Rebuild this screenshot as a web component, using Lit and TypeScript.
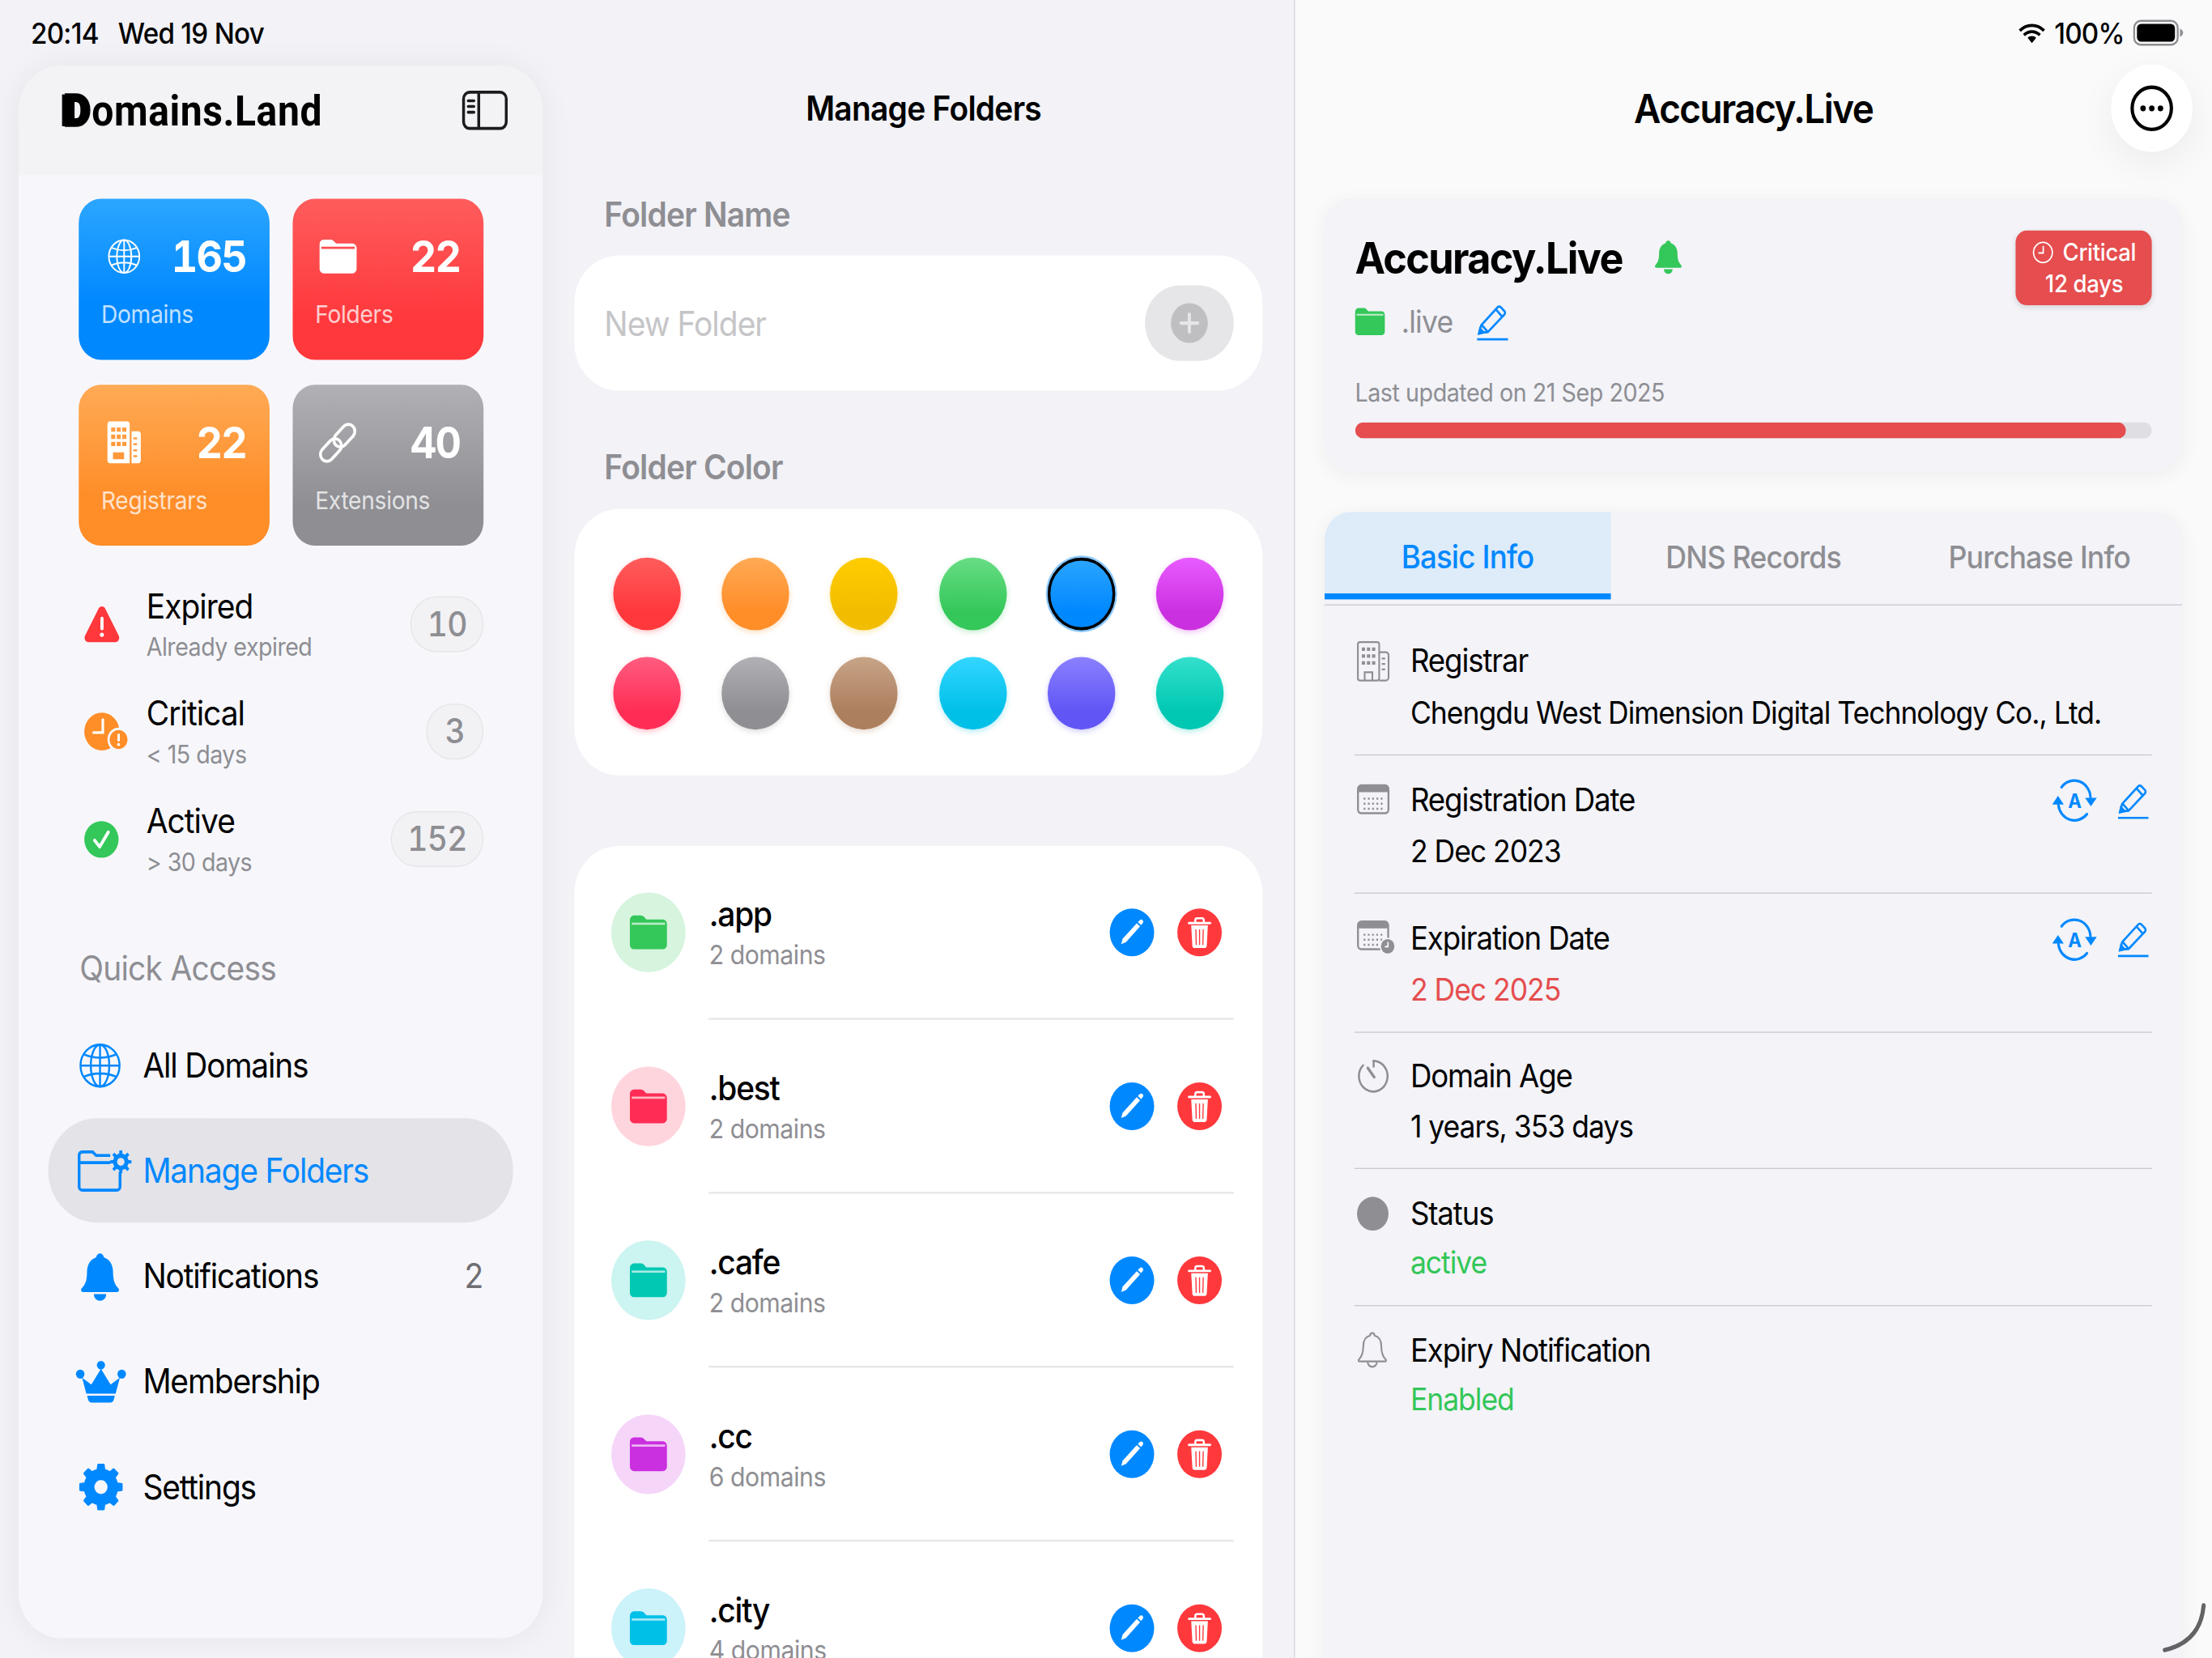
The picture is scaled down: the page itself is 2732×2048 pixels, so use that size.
import { LitElement, html, css, svg } from "lit";
import { customElement } from "lit/decorators.js";

const rects = (list: number[][]) =>
  list.map(([x, y, w, h]) => `M${x} ${y}h${w}v${h}h${-w}z`).join("");

const gearPath = (cx: number, cy: number, ro: number, ri: number, n: number) => {
  let d = "";
  const step = (Math.PI * 2) / n;
  for (let i = 0; i < n; i++) {
    const a = i * step - Math.PI / 2;
    const pts: [number, number][] = [
      [ri, a - step * 0.5],
      [ri, a - step * 0.27],
      [ro, a - step * 0.17],
      [ro, a + step * 0.17],
      [ri, a + step * 0.27],
    ];
    pts.forEach(([r, t], j) => {
      d += `${i === 0 && j === 0 ? "M" : "L"}${(cx + r * Math.cos(t)).toFixed(2)} ${(cy + r * Math.sin(t)).toFixed(2)}`;
    });
  }
  return d + "z";
};

const globe = (c: string, sw = 1.3) => html`<svg viewBox="0 0 24 24" fill="none" stroke=${c} stroke-width=${sw}>
  <circle cx="12" cy="12" r="11"/><ellipse cx="12" cy="12" rx="5.2" ry="11"/>
  <path d="M12 1v22M1 12h22M3 6.2Q12 9.6 21 6.2M3 17.8Q12 14.4 21 17.8"/></svg>`;

const folder = (c: string, strip: string) => html`<svg viewBox="0 0 20 17">
  <path fill=${c} d="M0 2.2A2.2 2.2 0 0 1 2.2 0h3.6c.9 0 1.4.3 2 .9l1.1 1.1h8.9A2.2 2.2 0 0 1 20 4.2v10.6a2.2 2.2 0 0 1-2.2 2.2H2.2A2.2 2.2 0 0 1 0 14.8z"/>
  <rect x="1" y="3.6" width="18" height="1.1" fill=${strip}/></svg>`;

const buildingFill = html`<svg viewBox="0 0 18 21">
  <path fill="#fff" fill-rule="evenodd" d="M1.5 0h9A1.5 1.5 0 0 1 12 1.5V21H1.5A1.5 1.5 0 0 1 0 19.5v-18A1.5 1.5 0 0 1 1.5 0z${rects([
    [2, 3, 2.2, 2.2], [5, 3, 2.2, 2.2], [8, 3, 2.2, 2.2],
    [2, 6.6, 2.2, 2.2], [5, 6.6, 2.2, 2.2], [8, 6.6, 2.2, 2.2],
    [2, 10.2, 2.2, 2.2], [5, 10.2, 2.2, 2.2], [8, 10.2, 2.2, 2.2],
    [3, 15.5, 6, 3.5],
  ])}"/>
  <path fill="#fff" fill-rule="evenodd" d="M13 5h3.5A1.5 1.5 0 0 1 18 6.5v13a1.5 1.5 0 0 1-1.5 1.5H13z${rects([
    [14, 8, 2, 1], [14, 11, 2, 1], [14, 14, 2, 1], [14, 17, 2, 1],
  ])}"/></svg>`;

const link = html`<svg viewBox="0 0 20 20" fill="none" stroke="#fff" stroke-width="1.6">
  <g transform="rotate(-45 10 10)"><rect x="-2" y="6.4" width="13.5" height="7.2" rx="3.6"/><rect x="8.500" y="6.4" width="13.5" height="7.2" rx="3.6"/></g></svg>`;

const triangle = html`<svg viewBox="0 0 19 18">
  <path fill="#ff383c" d="M7.7 1.1c.8-1.4 2.8-1.4 3.6 0l7.3 13.7c.7 1.4-.2 3.2-1.8 3.2H2.2C.6 18-.3 16.2.4 14.800z"/>
  <rect x="8.7" y="5.2" width="1.7" height="6.8" rx=".8" fill="#fff"/><circle cx="9.5" cy="14.300" r="1.1" fill="#fff"/></svg>`;

const folderGear = html`<svg viewBox="0 0 29 21" fill="none" stroke="#0088ff" stroke-width="1.500">
  <path d="M17.500 2.700h-7.600L8 .9H2.300A1.700 1.700 0 0 0 .7 2.600v15.800c0 1 .8 1.800 1.800 1.800H21c1 0 1.800-.8 1.800-1.800v-7.400"/>
  <path d="M1 6.300h16.500" stroke-width="1.500"/>
  <path fill="#0088ff" stroke="none" fill-rule="evenodd" d="${gearPath(23.2, 5.9, 5.8, 4.2, 8)}M23.200 3.900a2 2 0 1 0 .01 0z"/></svg>`;

const bellFill = (c: string) => html`<svg viewBox="0 0 20 23" fill=${c}>
  <path d="M10 0c1 0 1.900.8 2 1.900 3 .8 4.700 3.500 4.700 7 0 4 .9 6 2.700 7.800.7.700.3 1.800-.7 1.800H1.300c-1 0-1.400-1.100-.7-1.800C2.400 14.900 3.300 12.900 3.300 8.900c0-3.500 1.700-6.200 4.700-7C8.100.8 9 0 10 0z"/>
  <path d="M6.800 19.500h6.400a3.200 3.200 0 0 1-6.400 0z"/></svg>`;

const crown = html`<svg viewBox="0 0 27 21" fill="#0088ff">
  <circle cx="13.500" cy="2.200" r="2.200"/><circle cx="2.300" cy="6.700" r="2.300"/><circle cx="24.700" cy="6.700" r="2.300"/>
  <path d="M3.300 8.500l5 3.500 5.200-8 5.200 8 5-3.500-2.300 8H5.600z"/>
  <path d="M6 17.600h15l-.6 2c-.2.900-1 1.400-1.800 1.400H8.400c-.8 0-1.600-.5-1.800-1.400z"/></svg>`;

const gear = html`<svg viewBox="0 0 24 24"><path fill="#0088ff" stroke="#0088ff" stroke-width="1" stroke-linejoin="round" fill-rule="evenodd"
  d="${gearPath(12, 12, 11.300, 8.800, 8)}M12 8a4 4 0 1 0 .01 0z"/></svg>`;

const sidebarIcon = html`<svg viewBox="0 0 26 21" fill="none" stroke="#1c1c1e" stroke-width="1.600">
  <rect x=".9" y=".9" width="24.200" height="19.200" rx="3.500"/><path d="M9.500 1v19"/>
  <path d="M3.500 5.500h3.300M3.500 8.500h3.300M3.500 11.500h3.300" stroke-linecap="round" stroke-width="1.500"/></svg>`;

const editFill = html`<svg viewBox="0 0 24 24"><path fill="#fff" d="M6.200 17.900l.8-2.700 7.600-7.800 1.800 1.600-7.600 7.900z"/>
  <path fill="#fff" d="M15.200 6.800l1-.9c.5-.5 1.200-.5 1.600 0s.4 1.100 0 1.500l-.9 1z"/></svg>`;

const trash = html`<svg viewBox="0 0 24 24" fill="none">
  <path d="M6.300 7.300h11.400" stroke="#fff" stroke-width="1.200" stroke-linecap="round"/>
  <path d="M9.700 7V5.900c0-.6.400-1 1-1h2.600c.6 0 1 .4 1 1V7" stroke="#fff" stroke-width="1.100"/>
  <path fill="#fff" d="M7.500 8.500h9l-.6 10.200c0 .7-.6 1.200-1.200 1.200H9.300c-.7 0-1.200-.5-1.200-1.200z"/>
  <path d="M10 10.500l.2 7.800M12 10.500v7.800M14 10.500l-.2 7.800" stroke="#ff383c" stroke-width=".6"/></svg>`;

const penLine = html`<svg viewBox="0 0 17 18" fill="none" stroke="#0088ff" stroke-width="1.100">
  <path d="M1.500 14.200l1-3.800L11.200 1.500a1.200 1.200 0 0 1 1.700 0l1.900 1.900a1.200 1.200 0 0 1 0 1.700L6 13.800z"/>
  <path d="M10.300 2.600l3.400 3.600M2.700 10.200l3.200 3.400"/>
  <path d="M1.300 14.600l.6-2.500 1.900 1.900z" fill="#0088ff"/>
  <path d="M.3 17.400h16.400" stroke-width="1.100"/></svg>`;

const autoRenew = html`<svg viewBox="0 0 23 20" fill="none">
  <path d="M5.200 3.600A7.900 7.900 0 0 1 19.300 8M17.600 15.800A7.900 7.900 0 0 1 3.700 11.700" stroke="#0088ff" stroke-width="1.200" stroke-linecap="round"/>
  <path d="M16.700 8.400h5.700l-2.900 3.900zM.7 11.400h5.600l-2.800-3.900z" fill="#0088ff"/>
  <text x="11.500" y="13.100" text-anchor="middle" font-family="Inter" font-weight="700" font-size="8.800" fill="#0088ff">A</text></svg>`;

const bOutline = html`<svg viewBox="0 0 19 22" fill="none" stroke="#8e8e93" stroke-width="1">
  <rect x=".5" y=".5" width="12.500" height="21" rx="1.200"/><path d="M13 6h3.800c.9 0 1.700.8 1.700 1.700v12.100c0 .9-.8 1.700-1.700 1.700H13"/>
  <path d="M4.500 21.500V17h4.500v4.500"/>
  <path fill="#8e8e93" stroke="none" d="${rects([
    [2.800, 3.400, 1.900, 1.900], [5.800, 3.400, 1.900, 1.900], [8.800, 3.400, 1.900, 1.900],
    [2.800, 7.200, 1.900, 1.900], [5.800, 7.200, 1.900, 1.900], [8.800, 7.200, 1.900, 1.900],
    [2.800, 11, 1.900, 1.900], [5.800, 11, 1.900, 1.900], [8.800, 11, 1.900, 1.900],
    [14.500, 9, 2, 1], [14.500, 12, 2, 1], [14.500, 15, 2, 1],
  ])}"/></svg>`;

const calDots = rects(
  [8.500, 11.700, 14.900].flatMap((y) =>
    [4.500, 7.400, 10.300, 13.200, 16.100].map((x) => [x, y, 1.200, 1.200])
  )
);
const calendar = html`<svg viewBox="0 0 22 19">
  <path fill="#8e8e93" fill-rule="evenodd" d="M3 0h16a3 3 0 0 1 3 3v13a3 3 0 0 1-3 3H3a3 3 0 0 1-3-3V3a3 3 0 0 1 3-3zM1.300 5v11A1.700 1.700 0 0 0 3 17.700h16a1.700 1.700 0 0 0 1.700-1.700V5z"/>
  <path fill="#8e8e93" d="${calDots}"/></svg>`;
const calendarClock = html`<svg viewBox="0 0 26 22">
  <path fill="#8e8e93" fill-rule="evenodd" d="M3 0h16a3 3 0 0 1 3 3v13a3 3 0 0 1-3 3H3a3 3 0 0 1-3-3V3a3 3 0 0 1 3-3zM1.300 5v11A1.700 1.700 0 0 0 3 17.700h16a1.700 1.700 0 0 0 1.700-1.700V5z"/>
  <path fill="#8e8e93" d="${calDots}"/>
  <circle cx="21" cy="16.500" r="5.500" fill="#f3f3f8"/><circle cx="21" cy="16.500" r="4.600" fill="#8e8e93"/>
  <path d="M21.200 13.700v3h-2.200" fill="none" stroke="#fff" stroke-width=".9"/></svg>`;
const timer = html`<svg viewBox="0 0 24 24" fill="none" stroke="#8e8e93" stroke-width="1.500" stroke-linecap="round">
  <path d="M12.300 1.500A10.600 10.600 0 1 1 4.500 4.600"/><path d="M12.300 1.500v4"/>
  <path d="M12.700 12.800L8 6.500" stroke-width="2"/></svg>`;
const bellOutline = html`<svg viewBox="0 0 20 23" fill="none" stroke="#8e8e93" stroke-width="1.100">
  <path d="M10 .7c.8 0 1.400.6 1.500 1.500 2.900.7 4.400 3.300 4.400 6.500 0 4.300 1 6.300 2.900 8.100.5.500.2 1.200-.5 1.200H1.700c-.7 0-1-.7-.5-1.200C3.100 15 4.100 13 4.100 8.700c0-3.200 1.500-5.800 4.400-6.500C8.600 1.300 9.200.7 10 .7z"/>
  <path d="M7 18.300a3 3 0 0 0 6 0"/></svg>`;
const wifi = html`<svg viewBox="0 0 16 11.500" fill="none" stroke="#000" stroke-width="1.700">
  <path d="M.8 4.300a10.300 10.300 0 0 1 14.400 0M3.300 6.800a6.700 6.700 0 0 1 9.400 0"/>
  <path d="M8 7.300c1 0 1.900.4 2.500 1L8 11.200 5.500 8.300c.6-.6 1.500-1 2.500-1z" fill="#000" stroke="none"/></svg>`;
const battery = html`<svg viewBox="0 0 27 13">
  <rect x=".5" y=".5" width="23.500" height="12" rx="3.500" fill="none" stroke="#8e8e93" stroke-width="1"/>
  <rect x="2" y="2" width="20.500" height="9" rx="2.200" fill="#000"/>
  <path d="M25.200 4.500c1 .3 1.700 1.100 1.700 2s-.7 1.700-1.700 2z" fill="#8e8e93"/></svg>`;
const clockSmall = html`<svg viewBox="0 0 14 14" fill="none" stroke="#fff" stroke-width=".9">
  <circle cx="7" cy="7" r="6.200"/><path d="M7.200 3v4.300H4"/></svg>`;

const SWATCHES = [
  ["#ff5c5c", "#ff383c"], ["#ffaa55", "#ff8d28"], ["#ffcc00", "#f2bd00"], ["#68dd85", "#34c759"], ["#2ca6ff", "#0088ff"], ["#e85cff", "#cb30e0"],
  ["#ff5c80", "#ff2d55"], ["#b0b0b5", "#8e8e93"], ["#c8a487", "#ac7f5e"], ["#33d6ff", "#00c0e8"], ["#8a80ff", "#6155f5"], ["#33e0cc", "#00c8b3"],
];

const FOLDERS = [
  { n: ".app", d: "2 domains", c: "#34c759" },
  { n: ".best", d: "2 domains", c: "#ff2d55" },
  { n: ".cafe", d: "2 domains", c: "#00c8b3" },
  { n: ".cc", d: "6 domains", c: "#cb30e0" },
  { n: ".city", d: "4 domains", c: "#00c0e8" },
];

const hexA = (hex: string, a: number) => {
  const v = parseInt(hex.slice(1), 16);
  return `rgba(${v >> 16},${(v >> 8) & 255},${v & 255},${a})`;
};

@customElement("app-root")
export class AppRoot extends LitElement {
  static styles = css`
    :host { display: block; width: 2732px; height: 2048px; overflow: hidden; background: #f2f2f7; }
    * { box-sizing: border-box; }
    svg { display: block; overflow: visible; flex: none; }
    .root {
      zoom: 2; width: 1194px; height: 834px; transform: scale(1.14405, 1.22782); transform-origin: 0 0;
      position: relative; overflow: hidden; display: flex; background: #f2f2f7;
      font-family: Inter, "Liberation Sans", sans-serif; color: #000; letter-spacing: -0.02em;
    }
    .status { position: absolute; top: 6.500px; left: 16.600px; right: 15.300px; height: 20px; display: flex; align-items: center; justify-content: space-between; font-size: 14.500px; font-weight: 500; z-index: 5; }
    .status .l { display: flex; gap: 10.500px; }
    .status .r { display: flex; align-items: center; gap: 5px; }
    .status .wifi { width: 14.600px; height: 10.500px; }
    .status .batt { width: 27px; height: 12.600px; }

    .left { width: 299px; flex: none; padding: 33px 6px 0 10px; }
    .sidebar { height: 791px; border-radius: 23px; background: #f7f7fb; box-shadow: 0 0 16px rgba(0,0,0,.06); overflow: hidden; }
    .side-head { height: 55px; background: #f3f3f6; display: flex; align-items: center; justify-content: space-between; padding: 0 18.500px 10px 24.500px; }
    .logo { font-family: Roboto, sans-serif; font-weight: 700; font-size: 21px; letter-spacing: .012em; display: flex; align-items: baseline; color: #000; }
    .logo .d { position: relative; font-weight: 900; font-size: 22px; width: 15px; letter-spacing: 0; -webkit-text-stroke: 1.500px #000; }
    .logo .d::before { content: ""; position: absolute; left: -1px; top: 5px; width: 6px; height: 16px; background: #000; }
    .side-head svg { width: 25.500px; height: 20px; }
    .stats { display: grid; grid-template-columns: 103px 103px; gap: 12.500px; padding: 12.200px 0 0 32.400px; }
    .stat { height: 81px; border-radius: 12px; padding: 15px 12.500px 0; color: #fff; }
    .stat .top { display: flex; justify-content: space-between; align-items: center; height: 28px; }
    .stat .ic { width: 24px; height: 22px; display: flex; align-items: center; justify-content: center; }
    .stat .num { font-size: 22px; font-weight: 700; letter-spacing: -.035em; font-feature-settings: "tnum"; }
    .stat .lab { font-size: 12.300px; line-height: 18px; margin-top: 6px; opacity: .75; letter-spacing: -.01em; margin-left: -.3px; }
    .blue { background: linear-gradient(#2ca6ff, #0088ff 65%); }
    .red { background: linear-gradient(#ff5c5c, #ff383c 75%); }
    .orange { background: linear-gradient(#ffaa55, #ff8d28 70%); }
    .gray { background: linear-gradient(#b0b0b5, #8e8e93 75%); }
    .st-list { padding: 13.500px 32px 0 32.400px; }
    .st { height: 54px; display: flex; align-items: center; }
    .st .ic { width: 36.600px; padding-left: 2.900px; flex: none; margin-top: -2px; }
    .st .ic svg { height: 18px; width: auto; }
    .st .tx { flex: 1; }
    .st .t { font-size: 17px; line-height: 21px; letter-spacing: -.025em; }
    .st .s { font-size: 12.500px; line-height: 20px; color: #8e8e93; letter-spacing: -.018em; }
    .pill { height: 28px; min-width: 31px; padding: 0 8.500px; border-radius: 14px; background: #f2f2f5; border: .5px solid #e4e4e7; color: #8e8e93; font-size: 17px; font-weight: 500; display: flex; align-items: center; justify-content: center; margin-top: -2.500px; font-feature-settings: "tnum"; }
    .qa { padding: 26px 0 0 32.900px; font-size: 17px; line-height: 22px; color: #8e8e93; }
    .nav { padding: 11.500px 16px 0; display: flex; flex-direction: column; gap: .5px; }
    .nav .it { height: 52.500px; border-radius: 26.250px; display: flex; align-items: center; padding: 0 16.500px 0 13px; font-size: 17px; letter-spacing: -.03em; }
    .nav .it.sel { background: #e3e3e8; color: #0088ff; }
    .nav .ib { width: 30px; margin-right: 8.100px; display: flex; justify-content: center; flex: none; }
    .nav .sp { flex: 1; }
    .nav .cnt { color: #6e6e73; }

    .mid { width: 399.400px; flex: none; padding: 0 17px 0 11px; }
    .ptitle { margin: 43.600px 0 0; text-align: center; font-size: 17px; line-height: 22px; font-weight: 600; position: relative; left: 2.800px; }
    .lbl { padding-left: 16.200px; font-size: 17px; font-weight: 600; color: #8e8e93; line-height: 22px; letter-spacing: -.02em; }
    .input { margin-top: 9.700px; height: 68px; border-radius: 24px; background: #fff; display: flex; align-items: center; justify-content: space-between; padding: 0 15.400px 0 16.200px; color: #c5c5c7; font-size: 17px; letter-spacing: -.025em; }
    .add { width: 48px; height: 38px; border-radius: 19px; background: #e6e6e8; display: flex; align-items: center; justify-content: center; }
    .add svg { width: 20px; height: 20px; }
    .colors { margin-top: 9.800px; height: 134px; background: #fff; border-radius: 24px; padding: 24.500px 20.900px 0; display: grid; grid-template-columns: repeat(6, 36.500px); justify-content: space-between; align-content: start; row-gap: 13.500px; }
    .sw { width: 36.500px; height: 36.500px; border-radius: 50%; }
    .sw.sel { outline: 1.800px solid #000; outline-offset: -1.800px; box-shadow: 0 0 0 1px rgba(0,136,255,.45); }
    .list { margin-top: 35.700px; background: #fff; border-radius: 24px 24px 0 0; height: 420px; overflow: hidden; padding-left: 20px; }
    .row { height: 87.500px; display: flex; align-items: center; position: relative; }
    .row .av { width: 40px; height: 40px; border-radius: 50%; display: flex; align-items: center; justify-content: center; flex: none; }
    .row .av svg { width: 20px; height: 17px; }
    .row .tx { flex: 1; padding: 1.800px 0 0 12.700px; }
    .row .n { font-size: 17px; line-height: 20px; font-weight: 500; letter-spacing: -.03em; }
    .row .d { font-size: 13.200px; line-height: 20.200px; color: #8e8e93; letter-spacing: -.015em; }
    .acts { display: flex; gap: 12.200px; padding-right: 22.100px; }
    .act { width: 24px; height: 24px; border-radius: 50%; display: flex; align-items: center; justify-content: center; }
    .act svg { width: 24px; height: 24px; }
    .act.e { background: #0088ff; } .act.x { background: #ff383c; }
    .rule { position: absolute; left: 52.700px; right: 15.400px; bottom: 0; height: 1px; background: #e8e8ea; }

    .right { flex: 1; background: #fafafa; position: relative; padding: 0 16px 0 16.600px; }
    .vline { position: absolute; left: 0; top: 0; bottom: 0; width: .5px; background: #cfcfd4; }
    .rtitle { margin: 42px 0 0; text-align: center; font-size: 20px; line-height: 26px; font-weight: 600; letter-spacing: -.032em; }
    .more { position: absolute; top: 32.600px; right: 10.400px; width: 44px; height: 44px; border-radius: 50%; background: #fff; box-shadow: 0 6px 20px rgba(0,0,0,.06); display: flex; align-items: center; justify-content: center; }
    .more svg { width: 23px; height: 23px; }
    .card { background: #f3f3f8; border-radius: 14px; box-shadow: 0 2px 10px rgba(0,0,0,.05); }
    .dom { margin-top: 31.800px; height: 137px; padding: 16.500px 16.300px 0 16.400px; position: relative; }
    .dom .h { display: flex; align-items: center; height: 26px; }
    .dom .name { font-size: 22px; font-weight: 700; letter-spacing: -.032em; }
    .dom .h svg { width: 15px; height: 17px; margin-left: 17.200px; }
    .dom .cat { display: flex; align-items: center; margin-top: 9.500px; height: 20px; color: #8e8e93; font-size: 15.500px; }
    .dom .cat .f { width: 16px; height: 13.500px; margin-right: 9px; }
    .dom .cat .p { width: 17.300px; height: 18px; margin-left: 13px; }
    .dom .upd { font-size: 12.500px; color: #8e8e93; margin-top: 17px; line-height: 17px; letter-spacing: -.015em; }
    .track { margin-top: 6.500px; height: 8px; border-radius: 4px; background: #dedee3; overflow: hidden; }
    .fill { height: 8px; border-radius: 4px; background: #e54d4e; }
    .badge { position: absolute; top: 16.200px; right: 16.300px; width: 73.500px; height: 37.500px; border-radius: 6px; background: #e54d4e; color: #fff; box-shadow: 0 1px 3px rgba(0,0,0,.12); font-size: 12px; font-weight: 500; line-height: 16.300px; text-align: center; padding-top: 2.800px; letter-spacing: -.01em; }
    .badge .a { display: flex; justify-content: center; align-items: center; gap: 5px; }
    .badge svg { width: 11.500px; height: 12px; }
    .tabs { margin-top: 20.500px; height: 620px; overflow: hidden; border-radius: 14px 14px 0 0; }
    .tabbar { display: grid; grid-template-columns: repeat(3, 1fr); height: 47.300px; border-bottom: .5px solid #c6c6cc; }
    .tab { display: flex; align-items: center; justify-content: center; font-size: 15.600px; font-weight: 500; color: #8e8e93; height: 46.800px; }
    .tab span { position: relative; top: -.300px; letter-spacing: -.022em; }
    .tab.on { color: #0088ff; background: #deebf9; height: 44.200px; position: relative; font-size: 16px; }
    .tab.on span { top: 1px; }
    .tab.on::after { content: ""; position: absolute; left: 0; right: 0; bottom: 0; height: 3px; background: #0088ff; }
    .info { padding: 5.700px 16.300px 0 16px; }
    .ir { display: flex; padding-top: 11.300px; height: 69.700px; border-bottom: .5px solid #c6c6cc; position: relative; }
    .ir:nth-child(n+4) { height: 68.800px; }
    .ir:nth-child(n+4) .v { margin-top: 2.600px; }
    .ir:last-child { border-bottom: 0; }
    .ir .ib { width: 30.300px; flex: none; padding-left: 1.600px; height: 22px; display: flex; align-items: center; }
    .ir .t { font-size: 16px; line-height: 22px; letter-spacing: -.03em; }
    .ir .v { font-size: 15.500px; line-height: 22px; margin-top: 3.900px; letter-spacing: -.028em; }
    .v.red-t { color: #e54d4e; } .v.green-t { color: #34c759; }
    .ir .acts2 { position: absolute; top: 12.200px; right: 1.500px; display: flex; align-items: center; gap: 10.500px; }
    .acts2 .au { width: 25.500px; height: 21.500px; } .acts2 .pe { width: 17px; height: 18px; }
    .dot { width: 17px; height: 17px; border-radius: 50%; background: #8e8e93; }
    .corner { position: absolute; left: 1165px; top: 805px; width: 27px; height: 27px; z-index: 6; }
  `;

  stat(n: string, lab: string, cls: string, icon: unknown, w: number, h: number) {
    return html`<div class="stat ${cls}"><div class="top"><div class="ic"><div style="width:${w}px;height:${h}px">${icon}</div></div><div class="num">${n}</div></div><div class="lab">${lab}</div></div>`;
  }
  nav(t: string, icon: unknown, w: number, h: number, sel = false, cnt = "", dx = 0) {
    return html`<div class="it ${sel ? "sel" : ""}"><div class="ib"><div style="width:${w}px;height:${h}px;transform:translateX(${dx}px)">${icon}</div></div><span>${t}</span><span class="sp"></span><span class="cnt">${cnt}</span></div>`;
  }
  ir(icon: unknown, w: number, h: number, t: string, v: string, cls = "", actions = false) {
    return html`<div class="ir"><div class="ib"><div style="width:${w}px;height:${h}px">${icon}</div></div><div><div class="t">${t}</div><div class="v ${cls}">${v}</div></div>
      ${actions ? html`<div class="acts2"><div class="au">${autoRenew}</div><div class="pe">${penLine}</div></div>` : ""}</div>`;
  }

  render() {
    return html`<div class="root">
      <div class="status"><div class="l"><span>20:14</span><span>Wed 19 Nov</span></div>
        <div class="r"><div class="wifi">${wifi}</div><span>100%</span><div class="batt">${battery}</div></div></div>

      <div class="left"><div class="sidebar">
        <div class="side-head"><div class="logo"><span class="d">D</span><span>omains.Land</span></div>${sidebarIcon}</div>
        <div class="stats">
          ${this.stat("165", "Domains", "blue", globe("#fff", 1.1), 18, 18)}
          ${this.stat("22", "Folders", "red", folder("#fff", "#ff4a4f"), 20, 17)}
          ${this.stat("22", "Registrars", "orange", buildingFill, 18, 21)}
          ${this.stat("40", "Extensions", "gray", link, 19.500, 19.500)}
        </div>
        <div class="st-list">
          <div class="st"><div class="ic">${triangle}</div><div class="tx"><div class="t">Expired</div><div class="s">Already expired</div></div><div class="pill">10</div></div>
          <div class="st"><div class="ic"><svg viewBox="0 0 24 20" style="height:20px;width:24px">${svg`<circle cx="9.500" cy="10" r="9.500" fill="#ff8d28"/><path d="M10 4v6.500H5" fill="none" stroke="#fff" stroke-width="1.400" stroke-linecap="round"/><circle cx="18.500" cy="14" r="6" fill="#f7f7fb"/><circle cx="18.500" cy="14" r="4.800" fill="#ff8d28"/><rect x="17.900" y="11" width="1.300" height="4" rx=".6" fill="#fff"/><circle cx="18.500" cy="16.500" r=".8" fill="#fff"/>`}</svg></div><div class="tx"><div class="t">Critical</div><div class="s">&lt; 15 days</div></div><div class="pill">3</div></div>
          <div class="st"><div class="ic"><svg viewBox="0 0 20 20" style="height:18.500px;width:18.500px">${svg`<circle cx="10" cy="10" r="10" fill="#34c759"/><path d="M6 10.500l3 3.500 5-8" fill="none" stroke="#fff" stroke-width="1.800" stroke-linecap="round" stroke-linejoin="round"/>`}</svg></div><div class="tx"><div class="t">Active</div><div class="s">&gt; 30 days</div></div><div class="pill">152</div></div>
        </div>
        <div class="qa">Quick Access</div>
        <div class="nav">
          ${this.nav("All Domains", globe("#0088ff", 1.1), 23, 22.500)}
          ${this.nav("Manage Folders", folderGear, 29, 20.500, true, "", 2.500)}
          ${this.nav("Notifications", bellFill("#0088ff"), 21, 22.500, false, "2")}
          ${this.nav("Membership", crown, 27, 21, false, "", .5)}
          ${this.nav("Settings", gear, 24, 23.500, false, "", .5)}
        </div>
      </div></div>

      <div class="mid">
        <div class="ptitle">Manage Folders</div>
        <div class="lbl" style="margin-top:31.400px">Folder Name</div>
        <div class="input"><span>New Folder</span><div class="add"><svg viewBox="0 0 20 20"><circle cx="10" cy="10" r="10" fill="#bfbfc2"/><path d="M10 5.500v9M5.500 10h9" stroke="#e6e6e8" stroke-width="1.700" stroke-linecap="round"/></svg></div></div>
        <div class="lbl" style="margin-top:27.300px">Folder Color</div>
        <div class="colors">
          ${SWATCHES.map(([a, b], i) => html`<div class="sw ${i === 4 ? "sel" : ""}" style="background:linear-gradient(${a},${b} 75%);${i === 4 ? "" : `box-shadow:0 1px 3px ${hexA(b, 0.3)}`}"></div>`)}
        </div>
        <div class="list">
          ${FOLDERS.map((f) => html`<div class="row">
            <div class="av" style="background:${hexA(f.c, 0.2)}">${folder(f.c, "rgba(255,255,255,.65)")}</div>
            <div class="tx"><div class="n">${f.n}</div><div class="d">${f.d}</div></div>
            <div class="acts"><div class="act e">${editFill}</div><div class="act x">${trash}</div></div>
            <div class="rule"></div>
          </div>`)}
        </div>
      </div>

      <div class="right">
        <div class="vline"></div>
        <div class="rtitle">Accuracy.Live</div>
        <div class="more"><svg viewBox="0 0 23 23"><circle cx="11.500" cy="11.500" r="10.600" fill="none" stroke="#000" stroke-width="1.800"/><circle cx="6.800" cy="11.500" r="1.500"/><circle cx="11.500" cy="11.500" r="1.500"/><circle cx="16.200" cy="11.500" r="1.500"/></svg></div>
        <div class="card dom">
          <div class="h"><span class="name">Accuracy.Live</span>${bellFill("#34c759")}</div>
          <div class="cat"><div class="f">${folder("#34c759", "rgba(255,255,255,.65)")}</div><span>.live</span><div class="p">${penLine}</div></div>
          <div class="upd">Last updated on 21 Sep 2025</div>
          <div class="track"><div class="fill" style="width:96.700%"></div></div>
          <div class="badge"><div class="a">${clockSmall}<span>Critical</span></div><div>12 days</div></div>
        </div>
        <div class="card tabs">
          <div class="tabbar"><div class="tab on"><span>Basic Info</span></div><div class="tab"><span>DNS Records</span></div><div class="tab"><span>Purchase Info</span></div></div>
          <div class="info">
            ${this.ir(bOutline, 17.500, 20, "Registrar", "Chengdu West Dimension Digital Technology Co., Ltd.")}
            ${this.ir(calendar, 17.500, 16, "Registration Date", "2 Dec 2023", "", true)}
            ${this.ir(calendarClock, 20.500, 18, "Expiration Date", "2 Dec 2025", "red-t", true)}
            ${this.ir(timer, 17.500, 18, "Domain Age", "1 years, 353 days")}
            ${this.ir(html`<div class="dot"></div>`, 17, 17, "Status", "active", "green-t")}
            ${this.ir(bellOutline, 16.500, 18.500, "Expiry Notification", "Enabled", "green-t")}
          </div>
        </div>
      </div>

      <svg class="corner" viewBox="0 0 27 27"><path d="M24.500 2.500C23.500 14 17 22 3.500 25" fill="none" stroke="#636366" stroke-width="2.200" stroke-linecap="round"/></svg>
    </div>`;
  }
}
